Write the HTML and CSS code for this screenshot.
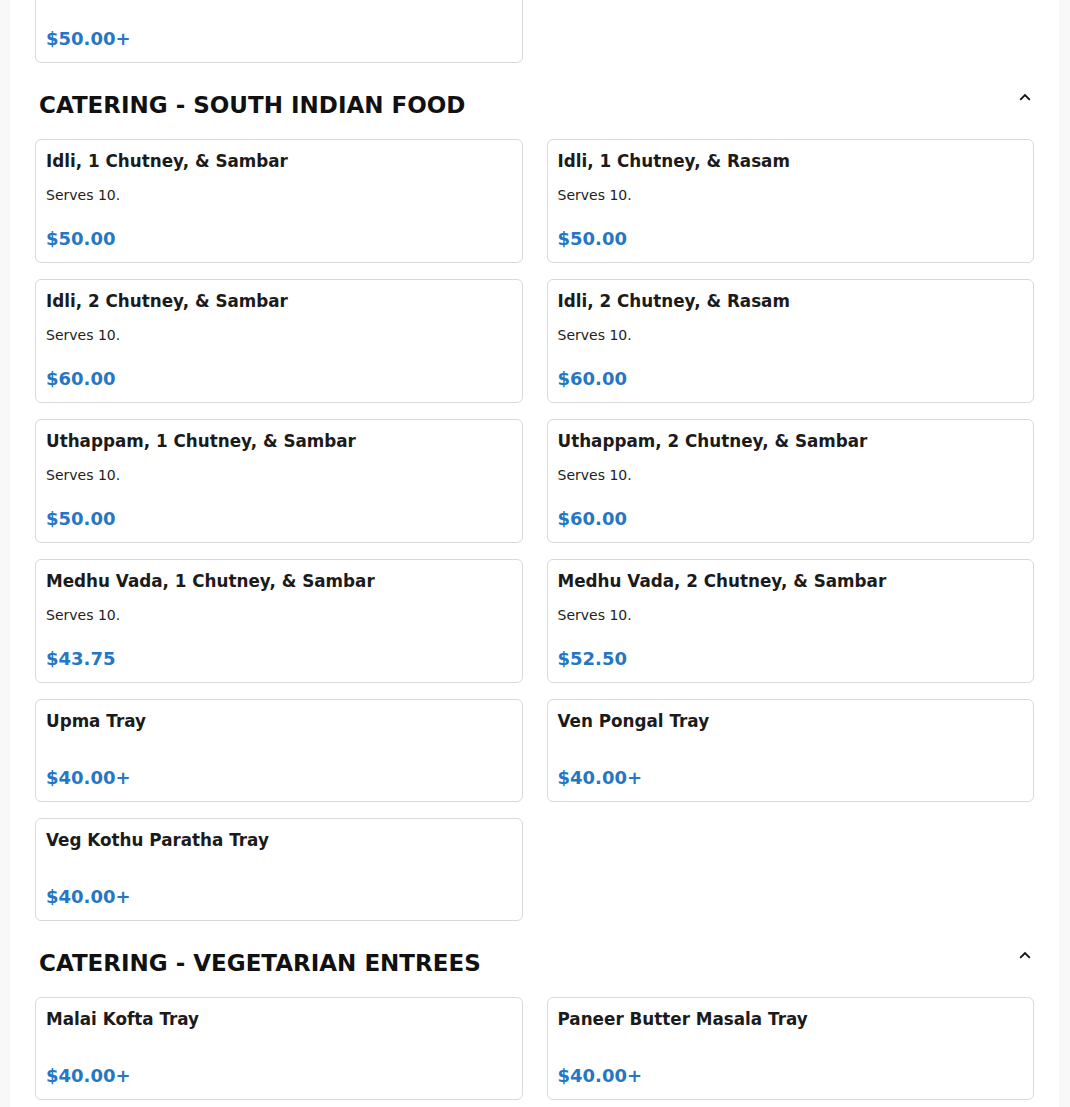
FILE: index.html
```html
<!DOCTYPE html>
<html lang="en">
<head>
<meta charset="utf-8">
<title>Catering Menu</title>
<link rel="stylesheet" href="styles.css">
</head>
<body>
<main class="page">
  <section class="section section-cut">
    <div class="grid">
      <div class="card">
        <div class="card-title">&nbsp;</div>
        <div class="card-price">$50.00+</div>
      </div>
    </div>
  </section>

  <section class="section">
    <div class="section-head">
      <h2 class="section-title">CATERING - SOUTH INDIAN FOOD</h2>
      <svg class="chevron" width="12" height="8" viewBox="0 0 12 8" aria-hidden="true"><path d="M1.2 6.8 L6 2 L10.8 6.8" fill="none" stroke="#111" stroke-width="1.8"/></svg>
    </div>
    <div class="grid">
      <div class="card">
        <div class="card-title">Idli, 1 Chutney, &amp; Sambar</div>
        <div class="card-desc">Serves 10.</div>
        <div class="card-price">$50.00</div>
      </div>
      <div class="card">
        <div class="card-title">Idli, 1 Chutney, &amp; Rasam</div>
        <div class="card-desc">Serves 10.</div>
        <div class="card-price">$50.00</div>
      </div>
      <div class="card">
        <div class="card-title">Idli, 2 Chutney, &amp; Sambar</div>
        <div class="card-desc">Serves 10.</div>
        <div class="card-price">$60.00</div>
      </div>
      <div class="card">
        <div class="card-title">Idli, 2 Chutney, &amp; Rasam</div>
        <div class="card-desc">Serves 10.</div>
        <div class="card-price">$60.00</div>
      </div>
      <div class="card">
        <div class="card-title">Uthappam, 1 Chutney, &amp; Sambar</div>
        <div class="card-desc">Serves 10.</div>
        <div class="card-price">$50.00</div>
      </div>
      <div class="card">
        <div class="card-title">Uthappam, 2 Chutney, &amp; Sambar</div>
        <div class="card-desc">Serves 10.</div>
        <div class="card-price">$60.00</div>
      </div>
      <div class="card">
        <div class="card-title">Medhu Vada, 1 Chutney, &amp; Sambar</div>
        <div class="card-desc">Serves 10.</div>
        <div class="card-price">$43.75</div>
      </div>
      <div class="card">
        <div class="card-title">Medhu Vada, 2 Chutney, &amp; Sambar</div>
        <div class="card-desc">Serves 10.</div>
        <div class="card-price">$52.50</div>
      </div>
      <div class="card">
        <div class="card-title">Upma Tray</div>
        <div class="card-price">$40.00+</div>
      </div>
      <div class="card">
        <div class="card-title">Ven Pongal Tray</div>
        <div class="card-price">$40.00+</div>
      </div>
      <div class="card">
        <div class="card-title">Veg Kothu Paratha Tray</div>
        <div class="card-price">$40.00+</div>
      </div>
    </div>
  </section>

  <section class="section">
    <div class="section-head">
      <h2 class="section-title">CATERING - VEGETARIAN ENTREES</h2>
      <svg class="chevron" width="12" height="8" viewBox="0 0 12 8" aria-hidden="true"><path d="M1.2 6.8 L6 2 L10.8 6.8" fill="none" stroke="#111" stroke-width="1.8"/></svg>
    </div>
    <div class="grid">
      <div class="card">
        <div class="card-title">Malai Kofta Tray</div>
        <div class="card-price">$40.00+</div>
      </div>
      <div class="card">
        <div class="card-title">Paneer Butter Masala Tray</div>
        <div class="card-price">$40.00+</div>
      </div>
    </div>
  </section>
</main>
</body>
</html>
```

FILE: styles.css
```css
html, body {
  margin: 0;
  padding: 0;
}

body {
  background: #f8f8f8;
  font-family: "DejaVu Sans", Verdana, sans-serif;
  color: #1c1c1c;
}

.page {
  margin-left: 10px;
  width: 1049px;
  box-sizing: border-box;
  background: #ffffff;
  padding: 0 25px 40px;
  min-height: 1200px;
}

.section {
  margin-top: 29px;
}

.section-cut {
  margin-top: -40px;
}

.section-head {
  display: flex;
  justify-content: space-between;
  align-items: flex-start;
  padding: 0 3px 0 4px;
  margin-bottom: 20px;
}

.section-title {
  margin: 0;
  font-size: 23px;
  line-height: 27px;
  font-weight: bold;
  color: #111111;
}

.chevron {
  display: block;
  margin-top: 1px;
}

.grid {
  display: grid;
  grid-template-columns: 1fr 1fr;
  column-gap: 24px;
  row-gap: 16px;
}

.card {
  border: 1px solid #d9d9d9;
  border-radius: 6px;
  padding: 11px 10px 12px;
  background: #ffffff;
}

.card-title {
  font-size: 16.8px;
  line-height: 20px;
  font-weight: bold;
  color: #1b1b1b;
}

.card-desc {
  margin-top: 16px;
  font-size: 14px;
  line-height: 17px;
  color: #222222;
}

.card-price {
  margin-top: 24px;
  font-size: 18px;
  line-height: 22px;
  font-weight: bold;
  color: #2677c3;
}

.card-title + .card-price {
  margin-top: 36px;
}
```
